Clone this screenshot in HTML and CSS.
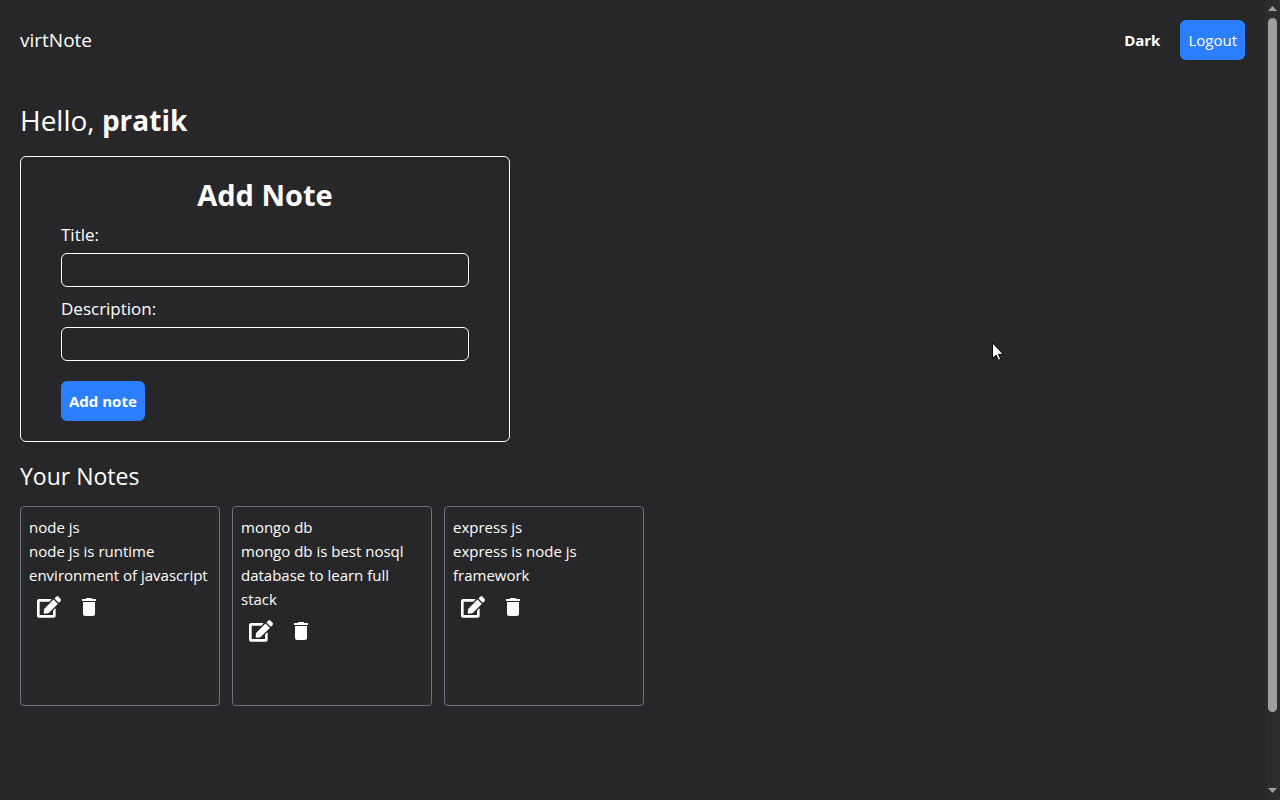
FILE: index.html
```html
<!DOCTYPE html>
<html lang="en">
<head>
  <meta charset="utf-8">
  <meta name="viewport" content="width=device-width, initial-scale=1">
  <title>virtNote</title>
  <link rel="stylesheet" href="styles.css">
</head>
<body>
  <svg class="sprite" aria-hidden="true">
    <symbol id="icon-edit" viewBox="0 0 576 512">
      <path d="M402.600 83.200l90.200 90.200c3.800 3.800 3.800 10 0 13.800L274.400 405.600l-92.800 10.300c-12.400 1.400-22.900-9.100-21.500-21.500l10.300-92.800L388.800 83.200c3.800-3.800 10-3.800 13.800 0zm162-22.900l-48.800-48.800c-15.200-15.200-39.900-15.200-55.200 0l-35.400 35.400c-3.800 3.800-3.800 10 0 13.800l90.200 90.200c3.800 3.800 10 3.800 13.800 0l35.400-35.400c15.200-15.300 15.200-40 0-55.200zM384 346.200V448H64V128h229.800c3.200 0 6.200-1.300 8.500-3.500l40-40c7.600-7.600 2.200-20.500-8.500-20.500H48C21.500 64 0 85.500 0 112v352c0 26.500 21.500 48 48 48h352c26.500 0 48-21.500 48-48V306.200c0-10.700-12.900-16-20.500-8.500l-40 40c-2.200 2.300-3.500 5.300-3.500 8.500z"/>
    </symbol>
    <symbol id="icon-trash" viewBox="0 0 24 24">
      <path d="M6 19c0 1.100.9 2 2 2h8c1.100 0 2-.9 2-2V7H6v12zM19 4h-3.500l-1-1h-5l-1 1H5v2h14V4z"/>
    </symbol>
  </svg>

  <div class="page">
    <header class="header">
      <a class="brand" href="#">virtNote</a>
      <nav class="nav">
        <button class="theme-toggle" type="button">Dark</button>
        <button class="button" type="button">Logout</button>
      </nav>
    </header>

    <main class="main">
      <h1 class="greeting">Hello, <strong>pratik</strong></h1>

      <form class="note-form">
        <h2 class="form-title">Add Note</h2>
        <div class="field">
          <label class="label" for="title">Title:</label>
          <input class="input" id="title" name="title" type="text">
        </div>
        <div class="field">
          <label class="label" for="description">Description:</label>
          <input class="input" id="description" name="description" type="text">
        </div>
        <button class="button button-submit" type="submit">Add note</button>
      </form>

      <section class="notes">
        <h2 class="notes-title">Your Notes</h2>
        <ul class="note-list">
          <li class="note">
            <h3 class="note-title">node js</h3>
            <p class="note-text">node js is runtime environment of javascript</p>
            <div class="note-actions">
              <button class="icon-button" type="button" aria-label="Edit"><svg class="icon"><use href="#icon-edit"/></svg></button>
              <button class="icon-button" type="button" aria-label="Delete"><svg class="icon"><use href="#icon-trash"/></svg></button>
            </div>
          </li>
          <li class="note">
            <h3 class="note-title">mongo db</h3>
            <p class="note-text">mongo db is best nosql database to learn full stack</p>
            <div class="note-actions">
              <button class="icon-button" type="button" aria-label="Edit"><svg class="icon"><use href="#icon-edit"/></svg></button>
              <button class="icon-button" type="button" aria-label="Delete"><svg class="icon"><use href="#icon-trash"/></svg></button>
            </div>
          </li>
          <li class="note">
            <h3 class="note-title">express js</h3>
            <p class="note-text">express is node js framework</p>
            <div class="note-actions">
              <button class="icon-button" type="button" aria-label="Edit"><svg class="icon"><use href="#icon-edit"/></svg></button>
              <button class="icon-button" type="button" aria-label="Delete"><svg class="icon"><use href="#icon-trash"/></svg></button>
            </div>
          </li>
        </ul>
      </section>
    </main>
  </div>

  <div class="scrollbar" aria-hidden="true">
    <svg class="scroll-arrow" viewBox="0 0 9 5"><path d="M4.500 0L9 5H0z"/></svg>
    <div class="scroll-track"><div class="scroll-thumb"></div></div>
    <svg class="scroll-arrow" viewBox="0 0 9 5"><path d="M0 0h9L4.500 5z"/></svg>
  </div>

  <svg class="cursor" viewBox="0 0 12 19" aria-hidden="true">
    <path d="M.5.900v15.600l3.600-3.400 2.300 5.200 2.300-1-2.200-5h4.900z"/>
  </svg>
</body>
</html>
```

FILE: styles.css
```css
* {
  box-sizing: border-box;
  margin: 0;
  padding: 0;
}

body {
  display: flex;
  min-height: 100vh;
  background: #27272a;
  color: #fff;
  font-family: "Open Sans", "Noto Sans", sans-serif;
  font-size: 15px;
  line-height: 24px;
}

button,
input {
  border: 0;
  background: none;
  color: inherit;
  font: inherit;
}

button {
  cursor: pointer;
}

.sprite {
  position: absolute;
  width: 0;
  height: 0;
}

.page {
  flex: 1;
  min-width: 0;
}

.header {
  display: flex;
  align-items: center;
  justify-content: space-between;
  padding: 20px;
}

.brand {
  color: inherit;
  font-size: 19px;
  line-height: 28px;
  text-decoration: none;
}

.nav {
  display: flex;
  align-items: center;
  gap: 20px;
}

.theme-toggle {
  font-weight: 700;
}

.button {
  padding: 8px;
  border-radius: 6px;
  background: #2b7fff;
}

.main {
  display: flex;
  flex-direction: column;
  padding: 20px;
}

.greeting {
  font-size: 28px;
  font-weight: 400;
  line-height: 40px;
}

.note-form {
  display: flex;
  flex-direction: column;
  gap: 8px;
  width: 100%;
  max-width: 490px;
  margin-top: 16px;
  padding: 20px 40px;
  border: 1px solid #fff;
  border-radius: 6px;
}

.form-title {
  font-size: 29px;
  font-weight: 700;
  line-height: 36px;
  text-align: center;
}

.field {
  display: flex;
  flex-direction: column;
  gap: 4px;
}

.label {
  font-size: 17px;
  line-height: 28px;
}

.input {
  width: 100%;
  height: 34px;
  padding: 4px 8px;
  border: 1px solid #fff;
  border-radius: 6px;
}

.button-submit {
  align-self: flex-start;
  margin-top: 12px;
  font-weight: 700;
}

.notes {
  display: flex;
  flex-direction: column;
  gap: 12px;
  margin-top: 16px;
}

.notes-title {
  font-size: 23px;
  font-weight: 400;
  line-height: 36px;
}

.note-list {
  display: flex;
  flex-wrap: wrap;
  gap: 12px;
  list-style: none;
}

.note {
  width: 200px;
  min-height: 200px;
  padding: 8px;
  border: 1px solid #6a7282;
  border-radius: 4px;
}

.note-title {
  font-size: inherit;
  font-weight: 400;
}

.note-actions {
  display: flex;
  gap: 16px;
  padding: 8px;
}

.icon-button {
  display: flex;
}

.icon {
  width: 24px;
  height: 24px;
  fill: currentColor;
}

.scrollbar {
  position: sticky;
  top: 0;
  display: flex;
  flex-direction: column;
  align-items: center;
  gap: 7px;
  width: 15px;
  height: 100vh;
  padding: 6px 0 7px;
  background: #2c2c2c;
}

.scroll-arrow {
  width: 9px;
  height: 5px;
  fill: #9f9f9f;
}

.scroll-track {
  flex: 1;
  width: 9px;
}

.scroll-thumb {
  height: 91%;
  border-radius: 5px;
  background: #9f9f9f;
}

.cursor {
  position: absolute;
  top: 342px;
  left: 992px;
  width: 12px;
  height: 19px;
  fill: #fff;
  stroke: #000;
}
```
